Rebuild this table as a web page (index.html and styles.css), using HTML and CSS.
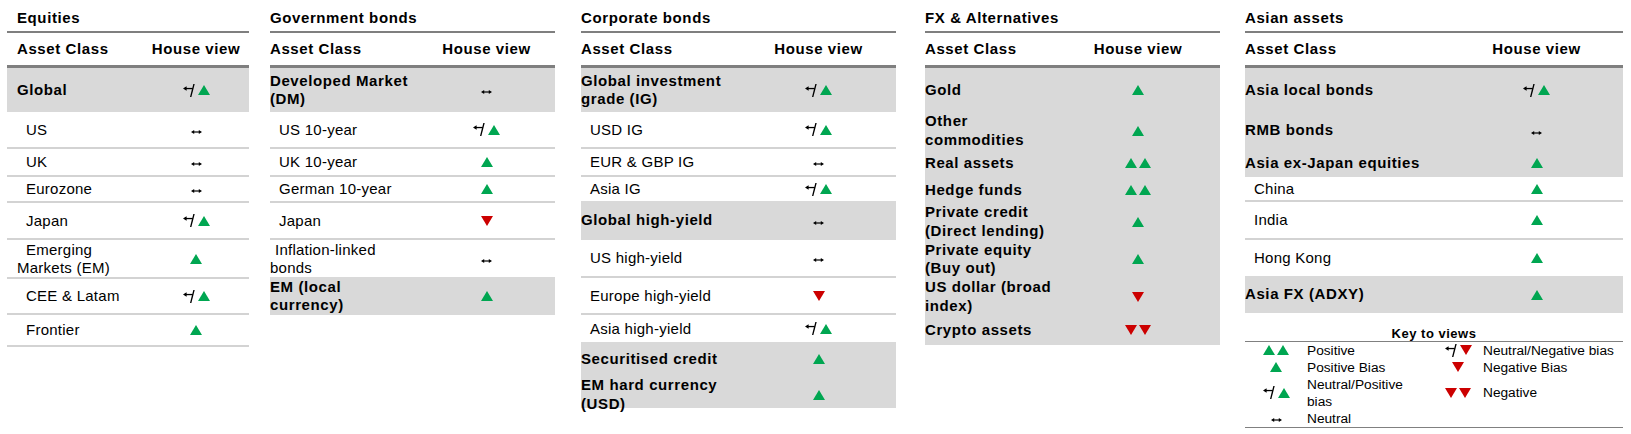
FILE: index.html
```html
<!DOCTYPE html>
<html lang="en">
<head>
<meta charset="utf-8">
<title>House views</title>
<link rel="stylesheet" href="styles.css">
</head>
<body>
<div class="page">

  <section class="panel p-eq">
    <div class="title">Equities</div>
    <div class="row thead"><span class="c1">Asset Class</span><span class="c2">House view</span></div>
    <div class="row shade b h44"><span class="c1">Global</span><span class="c2"><span class="v"><svg class="nb" width="12" height="13" viewBox="0 0 12 13"><path d="M0 4.5L3.6 2.2V6.8Z"/><rect x="2" y="3.9" width="7.8" height="1.3"/><path d="M10.3 0H11.7L8.4 13H7Z"/></svg><svg class="up" width="12" height="10" viewBox="0 0 12 10"><path d="M6 0L12 10H0Z"/></svg></span></span></div>
    <div class="row sub sep h37"><span class="c1">US</span><span class="c2"><svg class="neu" width="11" height="6" viewBox="0 0 11 6"><path d="M0 3L3.2 0.9V5.1ZM11 3L7.8 0.9V5.1Z"/><rect x="2" y="2.4" width="7" height="1.2"/></svg></span></div>
    <div class="row sub sep h28"><span class="c1">UK</span><span class="c2"><svg class="neu" width="11" height="6" viewBox="0 0 11 6"><path d="M0 3L3.2 0.9V5.1ZM11 3L7.8 0.9V5.1Z"/><rect x="2" y="2.4" width="7" height="1.2"/></svg></span></div>
    <div class="row sub sep h26"><span class="c1">Eurozone</span><span class="c2"><svg class="neu" width="11" height="6" viewBox="0 0 11 6"><path d="M0 3L3.2 0.9V5.1ZM11 3L7.8 0.9V5.1Z"/><rect x="2" y="2.4" width="7" height="1.2"/></svg></span></div>
    <div class="row sub sep h37"><span class="c1">Japan</span><span class="c2"><span class="v"><svg class="nb" width="12" height="13" viewBox="0 0 12 13"><path d="M0 4.5L3.6 2.2V6.8Z"/><rect x="2" y="3.9" width="7.8" height="1.3"/><path d="M10.3 0H11.7L8.4 13H7Z"/></svg><svg class="up" width="12" height="10" viewBox="0 0 12 10"><path d="M6 0L12 10H0Z"/></svg></span></span></div>
    <div class="row sub sep h39"><span class="c1">Emerging<br>Markets (EM)</span><span class="c2"><svg class="up" width="12" height="10" viewBox="0 0 12 10"><path d="M6 0L12 10H0Z"/></svg></span></div>
    <div class="row sub sep h36"><span class="c1">CEE &amp; Latam</span><span class="c2"><span class="v"><svg class="nb" width="12" height="13" viewBox="0 0 12 13"><path d="M0 4.5L3.6 2.2V6.8Z"/><rect x="2" y="3.9" width="7.8" height="1.3"/><path d="M10.3 0H11.7L8.4 13H7Z"/></svg><svg class="up" width="12" height="10" viewBox="0 0 12 10"><path d="M6 0L12 10H0Z"/></svg></span></span></div>
    <div class="row sub sep h32"><span class="c1">Frontier</span><span class="c2"><svg class="up" width="12" height="10" viewBox="0 0 12 10"><path d="M6 0L12 10H0Z"/></svg></span></div>
  </section>

  <section class="panel p-gov">
    <div class="title">Government bonds</div>
    <div class="row thead"><span class="c1">Asset Class</span><span class="c2">House view</span></div>
    <div class="row shade b h44"><span class="c1">Developed Market<br>(DM)</span><span class="c2"><svg class="neu" width="11" height="6" viewBox="0 0 11 6"><path d="M0 3L3.2 0.9V5.1ZM11 3L7.8 0.9V5.1Z"/><rect x="2" y="2.4" width="7" height="1.2"/></svg></span></div>
    <div class="row sub sep h37"><span class="c1">US 10-year</span><span class="c2"><span class="v"><svg class="nb" width="12" height="13" viewBox="0 0 12 13"><path d="M0 4.5L3.6 2.2V6.8Z"/><rect x="2" y="3.9" width="7.8" height="1.3"/><path d="M10.3 0H11.7L8.4 13H7Z"/></svg><svg class="up" width="12" height="10" viewBox="0 0 12 10"><path d="M6 0L12 10H0Z"/></svg></span></span></div>
    <div class="row sub sep h28"><span class="c1">UK 10-year</span><span class="c2"><svg class="up" width="12" height="10" viewBox="0 0 12 10"><path d="M6 0L12 10H0Z"/></svg></span></div>
    <div class="row sub sep h26"><span class="c1">German 10-year</span><span class="c2"><svg class="up" width="12" height="10" viewBox="0 0 12 10"><path d="M6 0L12 10H0Z"/></svg></span></div>
    <div class="row sub sep h37"><span class="c1">Japan</span><span class="c2"><svg class="dn" width="12" height="10" viewBox="0 0 12 10"><path d="M0 0H12L6 10Z"/></svg></span></div>
    <div class="row sub-s h37"><span class="c1">Inflation-linked<br>bonds</span><span class="c2"><svg class="neu" width="11" height="6" viewBox="0 0 11 6"><path d="M0 3L3.2 0.9V5.1ZM11 3L7.8 0.9V5.1Z"/><rect x="2" y="2.4" width="7" height="1.2"/></svg></span></div>
    <div class="row shade b h38"><span class="c1">EM (local<br>currency)</span><span class="c2"><svg class="up" width="12" height="10" viewBox="0 0 12 10"><path d="M6 0L12 10H0Z"/></svg></span></div>
  </section>

  <section class="panel p-corp">
    <div class="title">Corporate bonds</div>
    <div class="row thead"><span class="c1">Asset Class</span><span class="c2">House view</span></div>
    <div class="row shade b h44"><span class="c1">Global investment<br>grade (IG)</span><span class="c2"><span class="v"><svg class="nb" width="12" height="13" viewBox="0 0 12 13"><path d="M0 4.5L3.6 2.2V6.8Z"/><rect x="2" y="3.9" width="7.8" height="1.3"/><path d="M10.3 0H11.7L8.4 13H7Z"/></svg><svg class="up" width="12" height="10" viewBox="0 0 12 10"><path d="M6 0L12 10H0Z"/></svg></span></span></div>
    <div class="row sub sep h37"><span class="c1">USD IG</span><span class="c2"><span class="v"><svg class="nb" width="12" height="13" viewBox="0 0 12 13"><path d="M0 4.5L3.6 2.2V6.8Z"/><rect x="2" y="3.9" width="7.8" height="1.3"/><path d="M10.3 0H11.7L8.4 13H7Z"/></svg><svg class="up" width="12" height="10" viewBox="0 0 12 10"><path d="M6 0L12 10H0Z"/></svg></span></span></div>
    <div class="row sub sep h28"><span class="c1">EUR &amp; GBP IG</span><span class="c2"><svg class="neu" width="11" height="6" viewBox="0 0 11 6"><path d="M0 3L3.2 0.9V5.1ZM11 3L7.8 0.9V5.1Z"/><rect x="2" y="2.4" width="7" height="1.2"/></svg></span></div>
    <div class="row sub h24"><span class="c1">Asia IG</span><span class="c2"><span class="v"><svg class="nb" width="12" height="13" viewBox="0 0 12 13"><path d="M0 4.5L3.6 2.2V6.8Z"/><rect x="2" y="3.9" width="7.8" height="1.3"/><path d="M10.3 0H11.7L8.4 13H7Z"/></svg><svg class="up" width="12" height="10" viewBox="0 0 12 10"><path d="M6 0L12 10H0Z"/></svg></span></span></div>
    <div class="row shade b h39"><span class="c1">Global high-yield</span><span class="c2"><svg class="neu" width="11" height="6" viewBox="0 0 11 6"><path d="M0 3L3.2 0.9V5.1ZM11 3L7.8 0.9V5.1Z"/><rect x="2" y="2.4" width="7" height="1.2"/></svg></span></div>
    <div class="row sub sep h38"><span class="c1">US high-yield</span><span class="c2"><svg class="neu" width="11" height="6" viewBox="0 0 11 6"><path d="M0 3L3.2 0.9V5.1ZM11 3L7.8 0.9V5.1Z"/><rect x="2" y="2.4" width="7" height="1.2"/></svg></span></div>
    <div class="row sub sep h37"><span class="c1">Europe high-yield</span><span class="c2"><svg class="dn" width="12" height="10" viewBox="0 0 12 10"><path d="M0 0H12L6 10Z"/></svg></span></div>
    <div class="row sub h27"><span class="c1">Asia high-yield</span><span class="c2"><span class="v"><svg class="nb" width="12" height="13" viewBox="0 0 12 13"><path d="M0 4.5L3.6 2.2V6.8Z"/><rect x="2" y="3.9" width="7.8" height="1.3"/><path d="M10.3 0H11.7L8.4 13H7Z"/></svg><svg class="up" width="12" height="10" viewBox="0 0 12 10"><path d="M6 0L12 10H0Z"/></svg></span></span></div>
    <div class="row shade b h34"><span class="c1">Securitised credit</span><span class="c2"><svg class="up" width="12" height="10" viewBox="0 0 12 10"><path d="M6 0L12 10H0Z"/></svg></span></div>
    <div class="row shade b h32"><span class="c1">EM hard currency<br>(USD)</span><span class="c2"><svg class="up" width="12" height="10" viewBox="0 0 12 10"><path d="M6 0L12 10H0Z"/></svg></span></div>
  </section>

  <section class="panel p-fx">
    <div class="title">FX &amp; Alternatives</div>
    <div class="row thead"><span class="c1">Asset Class</span><span class="c2">House view</span></div>
    <div class="row shade b h44"><span class="c1">Gold</span><span class="c2"><svg class="up" width="12" height="10" viewBox="0 0 12 10"><path d="M6 0L12 10H0Z"/></svg></span></div>
    <div class="row shade b h37"><span class="c1">Other<br>commodities</span><span class="c2"><svg class="up" width="12" height="10" viewBox="0 0 12 10"><path d="M6 0L12 10H0Z"/></svg></span></div>
    <div class="row shade b h28"><span class="c1">Real assets</span><span class="c2"><span class="v dbl"><svg class="up" width="12" height="10" viewBox="0 0 12 10"><path d="M6 0L12 10H0Z"/></svg><svg class="up" width="12" height="10" viewBox="0 0 12 10"><path d="M6 0L12 10H0Z"/></svg></span></span></div>
    <div class="row shade b h26"><span class="c1">Hedge funds</span><span class="c2"><span class="v dbl"><svg class="up" width="12" height="10" viewBox="0 0 12 10"><path d="M6 0L12 10H0Z"/></svg><svg class="up" width="12" height="10" viewBox="0 0 12 10"><path d="M6 0L12 10H0Z"/></svg></span></span></div>
    <div class="row shade b h37"><span class="c1">Private credit<br>(Direct lending)</span><span class="c2"><svg class="up" width="12" height="10" viewBox="0 0 12 10"><path d="M6 0L12 10H0Z"/></svg></span></div>
    <div class="row shade b h38"><span class="c1">Private equity<br>(Buy out)</span><span class="c2"><svg class="up" width="12" height="10" viewBox="0 0 12 10"><path d="M6 0L12 10H0Z"/></svg></span></div>
    <div class="row shade b h37"><span class="c1">US dollar (broad<br>index)</span><span class="c2"><svg class="dn" width="12" height="10" viewBox="0 0 12 10"><path d="M0 0H12L6 10Z"/></svg></span></div>
    <div class="row shade b h30"><span class="c1">Crypto assets</span><span class="c2"><span class="v dbl"><svg class="dn" width="12" height="10" viewBox="0 0 12 10"><path d="M0 0H12L6 10Z"/></svg><svg class="dn" width="12" height="10" viewBox="0 0 12 10"><path d="M0 0H12L6 10Z"/></svg></span></span></div>
  </section>

  <section class="panel p-asia">
    <div class="title">Asian assets</div>
    <div class="row thead"><span class="c1">Asset Class</span><span class="c2">House view</span></div>
    <div class="row shade b h44"><span class="c1">Asia local bonds</span><span class="c2"><span class="v"><svg class="nb" width="12" height="13" viewBox="0 0 12 13"><path d="M0 4.5L3.6 2.2V6.8Z"/><rect x="2" y="3.9" width="7.8" height="1.3"/><path d="M10.3 0H11.7L8.4 13H7Z"/></svg><svg class="up" width="12" height="10" viewBox="0 0 12 10"><path d="M6 0L12 10H0Z"/></svg></span></span></div>
    <div class="row shade b h37"><span class="c1">RMB bonds</span><span class="c2"><svg class="neu" width="11" height="6" viewBox="0 0 11 6"><path d="M0 3L3.2 0.9V5.1ZM11 3L7.8 0.9V5.1Z"/><rect x="2" y="2.4" width="7" height="1.2"/></svg></span></div>
    <div class="row shade b h28"><span class="c1">Asia ex-Japan equities</span><span class="c2"><svg class="up" width="12" height="10" viewBox="0 0 12 10"><path d="M6 0L12 10H0Z"/></svg></span></div>
    <div class="row sub sep h25"><span class="c1">China</span><span class="c2"><svg class="up" width="12" height="10" viewBox="0 0 12 10"><path d="M6 0L12 10H0Z"/></svg></span></div>
    <div class="row sub sep h38"><span class="c1">India</span><span class="c2"><svg class="up" width="12" height="10" viewBox="0 0 12 10"><path d="M6 0L12 10H0Z"/></svg></span></div>
    <div class="row sub h36"><span class="c1">Hong Kong</span><span class="c2"><svg class="up" width="12" height="10" viewBox="0 0 12 10"><path d="M6 0L12 10H0Z"/></svg></span></div>
    <div class="row shade b h37"><span class="c1">Asia FX (ADXY)</span><span class="c2"><svg class="up" width="12" height="10" viewBox="0 0 12 10"><path d="M6 0L12 10H0Z"/></svg></span></div>

    <div class="key">
      <div class="key-title">Key to views</div>
      <div class="key-grid">
        <span class="ki"><span class="v dbl"><svg class="up" width="12" height="10" viewBox="0 0 12 10"><path d="M6 0L12 10H0Z"/></svg><svg class="up" width="12" height="10" viewBox="0 0 12 10"><path d="M6 0L12 10H0Z"/></svg></span></span>
        <span class="kt">Positive</span>
        <span class="ki"><span class="v"><svg class="nb" width="12" height="13" viewBox="0 0 12 13"><path d="M0 4.5L3.6 2.2V6.8Z"/><rect x="2" y="3.9" width="7.8" height="1.3"/><path d="M10.3 0H11.7L8.4 13H7Z"/></svg><svg class="dn" width="12" height="10" viewBox="0 0 12 10"><path d="M0 0H12L6 10Z"/></svg></span></span>
        <span class="kt">Neutral/Negative bias</span>

        <span class="ki"><svg class="up" width="12" height="10" viewBox="0 0 12 10"><path d="M6 0L12 10H0Z"/></svg></span>
        <span class="kt">Positive Bias</span>
        <span class="ki"><svg class="dn" width="12" height="10" viewBox="0 0 12 10"><path d="M0 0H12L6 10Z"/></svg></span>
        <span class="kt">Negative Bias</span>

        <span class="ki"><span class="v"><svg class="nb" width="12" height="13" viewBox="0 0 12 13"><path d="M0 4.5L3.6 2.2V6.8Z"/><rect x="2" y="3.9" width="7.8" height="1.3"/><path d="M10.3 0H11.7L8.4 13H7Z"/></svg><svg class="up" width="12" height="10" viewBox="0 0 12 10"><path d="M6 0L12 10H0Z"/></svg></span></span>
        <span class="kt">Neutral/Positive<br>bias</span>
        <span class="ki"><span class="v dbl"><svg class="dn" width="12" height="10" viewBox="0 0 12 10"><path d="M0 0H12L6 10Z"/></svg><svg class="dn" width="12" height="10" viewBox="0 0 12 10"><path d="M0 0H12L6 10Z"/></svg></span></span>
        <span class="kt">Negative</span>

        <span class="ki"><svg class="neu" width="11" height="6" viewBox="0 0 11 6"><path d="M0 3L3.2 0.9V5.1ZM11 3L7.8 0.9V5.1Z"/><rect x="2" y="2.4" width="7" height="1.2"/></svg></span>
        <span class="kt">Neutral</span>
        <span class="ki"></span>
        <span class="kt"></span>
      </div>
    </div>
  </section>

</div>
</body>
</html>
```

FILE: styles.css
```css
html, body {
  margin: 0;
  padding: 0;
  background: #ffffff;
}

body {
  font-family: "Liberation Sans", Arial, Helvetica, sans-serif;
  color: #000000;
  font-size: 15px;
  line-height: 18px;
  letter-spacing: 0.25px;
}

.page {
  display: flex;
  align-items: flex-start;
  padding: 9px 0 0 7px;
}

.panel {
  flex: none;
  --pl: 0px;
}

.p-eq   { width: 242px; --hv: 106px; --pl: 10px; }
.p-gov  { width: 285px; --hv: 137px; margin-left: 21px; }
.p-corp { width: 315px; --hv: 155px; margin-left: 26px; }
.p-fx   { width: 295px; --hv: 164px; margin-left: 29px; }
.p-asia { width: 378px; --hv: 173px; margin-left: 25px; }

.title {
  font-weight: bold;
  letter-spacing: 0.6px;
  height: 18px;
  line-height: 18px;
  margin-bottom: 4px;
  padding-left: var(--pl);
}

.row {
  display: grid;
  grid-template-columns: 1fr var(--hv);
  align-items: center;
  box-sizing: border-box;
}

.thead {
  height: 37px;
  border-top: 2px solid #7f7f7f;
  border-bottom: 3px solid #7f7f7f;
  font-weight: bold;
  letter-spacing: 0.6px;
}

.c1 {
  padding-left: var(--pl);
}

.c2 {
  display: flex;
  justify-content: center;
  align-items: center;
}

.b {
  font-weight: bold;
  letter-spacing: 0.6px;
  line-height: 18.5px;
}

.sub .c1 { text-indent: 9px; }
.sub-s .c1 { text-indent: 5px; }

.shade { background: #d9d9d9; }
.sep { border-bottom: 2px solid #d3d3d3; }

.h24 { height: 24px; }
.h25 { height: 25px; }
.h26 { height: 26px; }
.h27 { height: 27px; }
.h28 { height: 28px; }
.h30 { height: 30px; }
.h32 { height: 32px; }
.h34 { height: 34px; }
.h36 { height: 36px; }
.h37 { height: 37px; }
.h38 { height: 38px; }
.h39 { height: 39px; }
.h44 { height: 44px; }

/* icons */
.v {
  display: inline-flex;
  align-items: center;
  gap: 3px;
}
.v.dbl { gap: 2px; }

svg { display: block; flex: none; }
.up { fill: #00a651; }
.dn { fill: #cc0000; }
.nb { fill: #000000; }
.neu { fill: #000000; margin-top: 4px; }

/* key */
.key {
  margin-top: 12.5px;
}

.key-title {
  text-align: center;
  font-weight: bold;
  font-size: 13px;
  line-height: 15px;
  letter-spacing: 0.5px;
  border-bottom: 1px solid #808080;
}

.key-grid {
  display: grid;
  grid-template-columns: 62px 126px 50px 1fr;
  font-size: 13.7px;
  line-height: 17px;
  letter-spacing: 0;
  border-bottom: 1px solid #808080;
}

.ki {
  display: flex;
  justify-content: center;
  align-items: center;
}

.kt {
  display: flex;
  align-items: center;
}
```
